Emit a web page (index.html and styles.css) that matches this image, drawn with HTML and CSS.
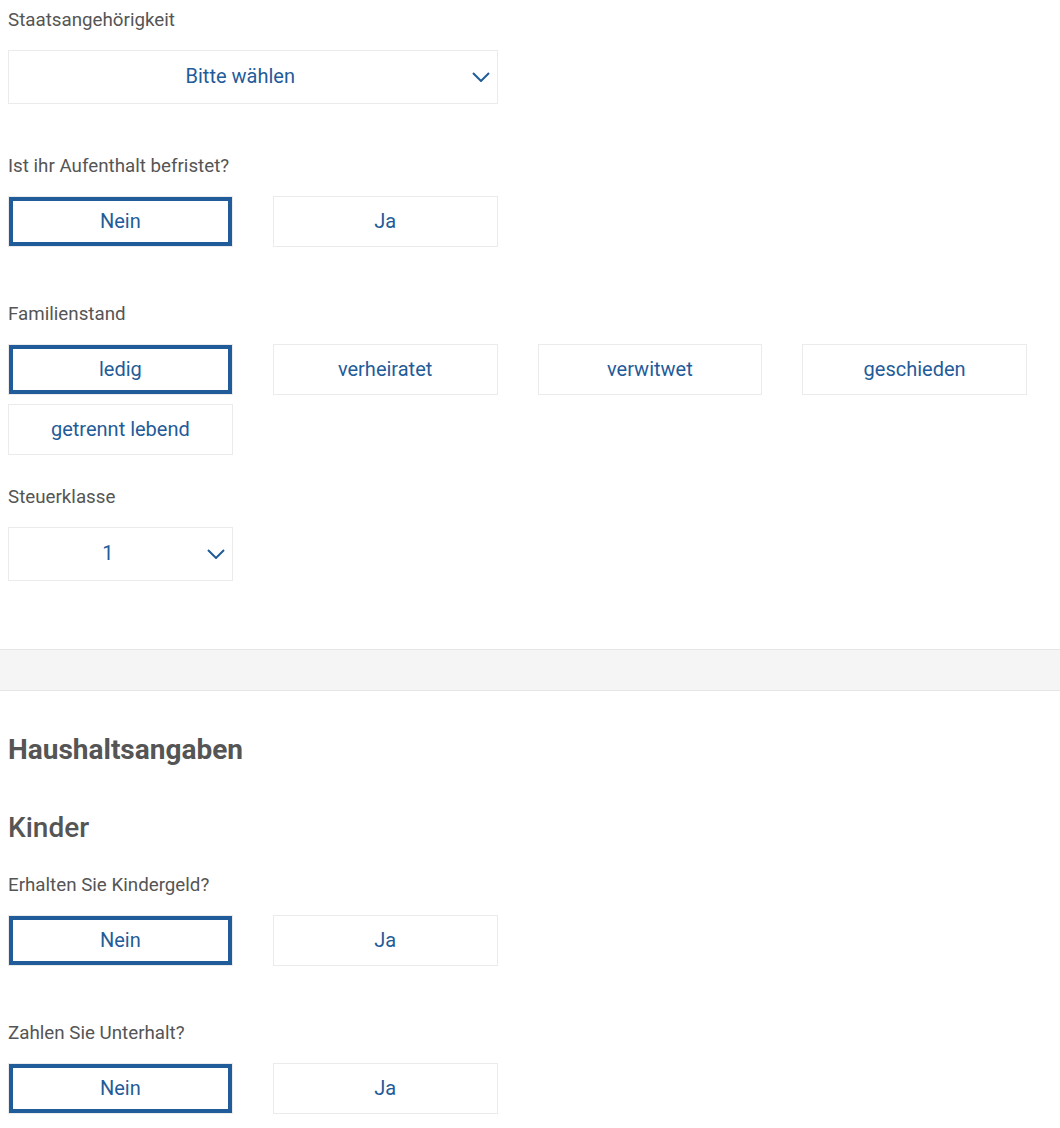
FILE: index.html
```html
<!DOCTYPE html>
<html lang="de">
<head>
<meta charset="utf-8">
<title>Formular</title>
<link rel="stylesheet" href="styles.css">
</head>
<body>
<main class="page">
  <section class="block">
    <div class="field field-after-select">
      <div class="label">Staatsangehörigkeit</div>
      <div class="grid">
        <div class="select span-2">
          <span class="select-value">Bitte wählen</span>
          <svg class="chevron" width="18" height="10" viewBox="0 0 18 10"><path d="M1 1 L9 9 L17 1" fill="none" stroke="#1f5c99" stroke-width="2"/></svg>
        </div>
      </div>
    </div>

    <div class="field field-after-buttons">
      <div class="label">Ist ihr Aufenthalt befristet?</div>
      <div class="grid">
        <div class="option selected">Nein</div>
        <div class="option">Ja</div>
      </div>
    </div>

    <div class="field field-after-grid">
      <div class="label">Familienstand</div>
      <div class="grid">
        <div class="option selected">ledig</div>
        <div class="option">verheiratet</div>
        <div class="option">verwitwet</div>
        <div class="option">geschieden</div>
        <div class="option">getrennt lebend</div>
      </div>
    </div>

    <div class="field">
      <div class="label">Steuerklasse</div>
      <div class="grid">
        <div class="select">
          <span class="select-value">1</span>
          <svg class="chevron" width="18" height="10" viewBox="0 0 18 10"><path d="M1 1 L9 9 L17 1" fill="none" stroke="#1f5c99" stroke-width="2"/></svg>
        </div>
      </div>
    </div>
  </section>

  <div class="band"></div>

  <section class="block household">
    <h2 class="section-title">Haushaltsangaben</h2>
    <h3 class="sub-title">Kinder</h3>

    <div class="field field-after-buttons">
      <div class="label">Erhalten Sie Kindergeld?</div>
      <div class="grid">
        <div class="option selected">Nein</div>
        <div class="option">Ja</div>
      </div>
    </div>

    <div class="field">
      <div class="label">Zahlen Sie Unterhalt?</div>
      <div class="grid">
        <div class="option selected">Nein</div>
        <div class="option">Ja</div>
      </div>
    </div>
  </section>
</main>
</body>
</html>
```

FILE: styles.css
```css
* {
  box-sizing: border-box;
}

html, body {
  margin: 0;
  padding: 0;
  background: #ffffff;
}

body {
  font-family: Roboto, "Liberation Sans", Arial, sans-serif;
  color: #555555;
}

.page {
  padding-top: 8px;
}

.block {
  padding: 0 8px;
}

.field-after-select {
  margin-bottom: 50px;
}

.field-after-buttons {
  margin-bottom: 55px;
}

.field-after-grid {
  margin-bottom: 30px;
}

.label {
  font-size: 18.75px;
  line-height: 24px;
  margin-bottom: 18px;
  color: #555555;
}

.grid {
  width: 1019px;
  display: grid;
  grid-template-columns: repeat(4, 1fr);
  column-gap: 40px;
  row-gap: 9px;
}

.span-2 {
  grid-column: span 2;
}

.option {
  height: 51px;
  border: 1px solid #ebebeb;
  background: #ffffff;
  color: #1f5c99;
  font-size: 20px;
  display: flex;
  align-items: center;
  justify-content: center;
  padding-bottom: 2px;
}

.option.selected {
  box-shadow: inset 0 0 0 4px #1f5c99;
}

.select {
  height: 54px;
  border: 1px solid #ebebeb;
  background: #ffffff;
  color: #1f5c99;
  font-size: 20px;
  display: flex;
  align-items: center;
  padding: 0 7px 0 8px;
}

.select-value {
  flex: 1;
  text-align: center;
  padding-bottom: 2px;
}

.chevron {
  flex: none;
  margin-left: 8px;
  display: block;
}

.band {
  margin-top: 68px;
  height: 42px;
  background: #f5f5f5;
  border-top: 1px solid #e6e6e6;
  border-bottom: 1px solid #e6e6e6;
}

.household {
  padding-top: 43px;
}

.section-title {
  margin: 0 0 46px;
  font-size: 28px;
  line-height: 32px;
  font-weight: 700;
  color: #555555;
}

.sub-title {
  margin: 0 0 29px;
  font-size: 28px;
  line-height: 32px;
  font-weight: 500;
  color: #555555;
}
```
